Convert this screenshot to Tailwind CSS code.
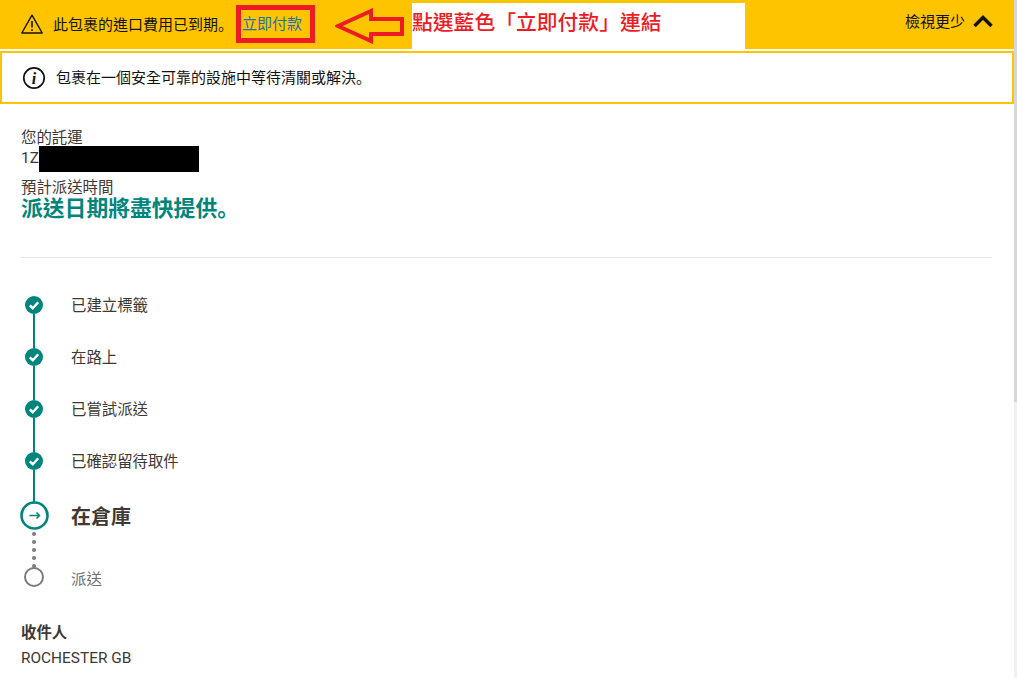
<!DOCTYPE html>
<html>
<head>
<meta charset="utf-8">
<script src="https://cdn.jsdelivr.net/npm/@tailwindcss/browser@4"></script>
</head>
<body class="bg-white overflow-hidden font-['Roboto','Noto_Sans_CJK_TC',sans-serif]">
<div class="relative w-[1017px] h-[690px] overflow-hidden bg-white">
  <div class="w-[1014px]">
    <!-- Alert bar -->
    <div class="relative h-[49px] bg-[#ffc400] flex items-center pl-[20px] pr-[20px] text-[15px] text-[#121212]">
      <svg class="w-[24px] h-[22px] shrink-0 -mt-[1px]" viewBox="0 0 24 22" fill="none" stroke="#121212" stroke-width="1.4"><path d="M12 2.2 22.2 20H1.8Z" stroke-linejoin="round"/><path d="M12 8v6.5M12 16.2v1.8" stroke-width="1.6"/></svg>
      <span class="ml-[9px]">此包裹的進口費用已到期<span class="font-['Noto_Sans_CJK_JP']">。</span></span>
      <a class="ml-[9px] text-[#1b6fb8]">立即付款</a>
      <span class="ml-auto -mt-[4px]">檢視更少</span>
      <svg class="ml-[7px] w-[22px] h-[14px] -mt-[7px]" viewBox="0 0 22 14" fill="none" stroke="#121212" stroke-width="3.4"><path d="M2.5 12 11 3.5l8.5 8.5"/></svg>
    </div>
    <!-- Info -->
    <div class="mt-[2px] h-[53px] border-2 border-[#ffc400] flex items-center pl-[20px] text-[15px] text-[#121212]">
      <svg class="w-[24px] h-[24px] shrink-0" viewBox="0 0 24 24"><circle cx="12" cy="12" r="10.2" fill="none" stroke="#121212" stroke-width="1.7"/><text x="12" y="17.5" text-anchor="middle" font-family="Liberation Serif" font-style="italic" font-weight="700" font-size="16" fill="#121212">i</text></svg>
      <span class="ml-[10px]">包裹在一個安全可靠的設施中等待清關或解決<span class="font-['Noto_Sans_CJK_JP']">。</span></span>
    </div>
    <!-- Shipment -->
    <div class="px-[21px] mr-[1px]">
      <div class="pt-[25px] text-[15.4px] leading-[19px] text-[#3d3935]">
        <p class="h-[17px]">您的託運</p>
        <p class="flex h-[26px] items-center"><span class="-mt-[2px]">1Z</span><span class="w-[160px] h-[26px] bg-black"></span></p>
        <p class="mt-[7px]">預計派送時間</p>
      </div>
      <p class="text-[21.8px] leading-[18px] font-bold text-[#00857d]">派送日期將盡快提供<span class="font-['Noto_Sans_CJK_JP']">。</span></p>
      <div class="mt-[39px] border-t border-[#e3e3e3]"></div>
      <!-- Timeline -->
      <div class="mt-[37px] flex flex-col text-[15.4px] text-[#3d3935]">
        <div class="flex items-start h-[52px]">
          <div class="relative w-[26px] flex justify-center">
            <svg class="w-[18px] h-[18px] mt-[1px]" viewBox="0 0 18 18"><circle cx="9" cy="9" r="9" fill="#00857d"/><path d="M4.8 9.3 7.8 12.2l5.4-6" fill="none" stroke="#fff" stroke-width="2.4"/></svg>
            <span class="absolute top-[19px] left-[12px] w-[2px] h-[34px] bg-[#00857d]"></span>
          </div>
          <span class="ml-[24px] leading-[20px] mt-[1px]">已建立標籤</span>
        </div>
        <div class="flex items-start h-[52px]">
          <div class="relative w-[26px] flex justify-center">
            <svg class="w-[18px] h-[18px] mt-[1px]" viewBox="0 0 18 18"><circle cx="9" cy="9" r="9" fill="#00857d"/><path d="M4.8 9.3 7.8 12.2l5.4-6" fill="none" stroke="#fff" stroke-width="2.4"/></svg>
            <span class="absolute top-[19px] left-[12px] w-[2px] h-[34px] bg-[#00857d]"></span>
          </div>
          <span class="ml-[24px] leading-[20px] mt-[1px]">在路上</span>
        </div>
        <div class="flex items-start h-[52px]">
          <div class="relative w-[26px] flex justify-center">
            <svg class="w-[18px] h-[18px] mt-[1px]" viewBox="0 0 18 18"><circle cx="9" cy="9" r="9" fill="#00857d"/><path d="M4.8 9.3 7.8 12.2l5.4-6" fill="none" stroke="#fff" stroke-width="2.4"/></svg>
            <span class="absolute top-[19px] left-[12px] w-[2px] h-[34px] bg-[#00857d]"></span>
          </div>
          <span class="ml-[24px] leading-[20px] mt-[1px]">已嘗試派送</span>
        </div>
        <div class="flex items-start h-[50px]">
          <div class="relative w-[26px] flex justify-center">
            <svg class="w-[18px] h-[18px] mt-[1px]" viewBox="0 0 18 18"><circle cx="9" cy="9" r="9" fill="#00857d"/><path d="M4.8 9.3 7.8 12.2l5.4-6" fill="none" stroke="#fff" stroke-width="2.4"/></svg>
            <span class="absolute top-[19px] left-[12px] w-[2px] h-[33px] bg-[#00857d]"></span>
          </div>
          <span class="ml-[24px] leading-[20px] mt-[1px]">已確認留待取件</span>
        </div>
        <div class="flex items-center h-[29px]">
          <div class="w-[26px] flex justify-center">
            <svg class="w-[29px] h-[29px] shrink-0" viewBox="0 0 29 29"><circle cx="14.5" cy="14.5" r="13" fill="#fff" stroke="#00857d" stroke-width="2.6"/><path d="M9.5 14.5h10M16.5 11.5l3 3-3 3" fill="none" stroke="#00857d" stroke-width="1.5"/></svg>
          </div>
          <span class="ml-[24px] mt-[2px] text-[20px] font-bold">在倉庫</span>
        </div>
        <div class="flex items-start h-[58px]">
          <div class="relative w-[26px] flex flex-col items-center">
            <span class="mt-[2px] w-[4px] h-[4px] rounded-full bg-[#7b7b7b]"></span>
            <span class="mt-[4px] w-[4px] h-[4px] rounded-full bg-[#7b7b7b]"></span>
            <span class="mt-[4px] w-[4px] h-[4px] rounded-full bg-[#7b7b7b]"></span>
            <span class="mt-[4px] w-[4px] h-[4px] rounded-full bg-[#7b7b7b]"></span>
            <span class="mt-[4px] w-[4px] h-[4px] rounded-full bg-[#7b7b7b]"></span>
            <span class="w-[20px] h-[20px] rounded-full border-2 border-[#7b7b7b] bg-white -mt-[1px]"></span>
          </div>
          <span class="ml-[24px] mt-[40px] leading-[20px] text-[#6e6e6e]">派送</span>
        </div>
        <p class="mt-[35px] leading-[20px] font-bold">收件人</p>
        <p class="mt-[5px] leading-[20px]">ROCHESTER GB</p>
      </div>
    </div>
  </div>
  <!-- Annotations -->
  <div class="absolute left-[412px] top-[3px] w-[333px] h-[46px] bg-white text-[#ed1c24] text-[20.8px] font-medium leading-[36px] whitespace-nowrap font-['Noto_Sans_CJK_TC',sans-serif]">點選藍色「立即付款」連結</div>
  <div class="absolute left-[236px] top-[5px] w-[79px] h-[38px] border-[5px] border-[#ed1c24]"></div>
  <svg class="absolute left-[335px] top-[8px] w-[70px] h-[36px]" viewBox="0 0 70 36"><path d="M3 18 36 3v8h31v15H36v7Z" fill="none" stroke="#ed1c24" stroke-width="4"/></svg>
  <!-- Scrollbar -->
  <div class="absolute right-0 top-0 w-[3px] h-[678px] bg-[#f1f1f1]"><div class="w-[3px] h-[402px] bg-[#d6d6d6]"></div></div>
</div>
</body>
</html>
